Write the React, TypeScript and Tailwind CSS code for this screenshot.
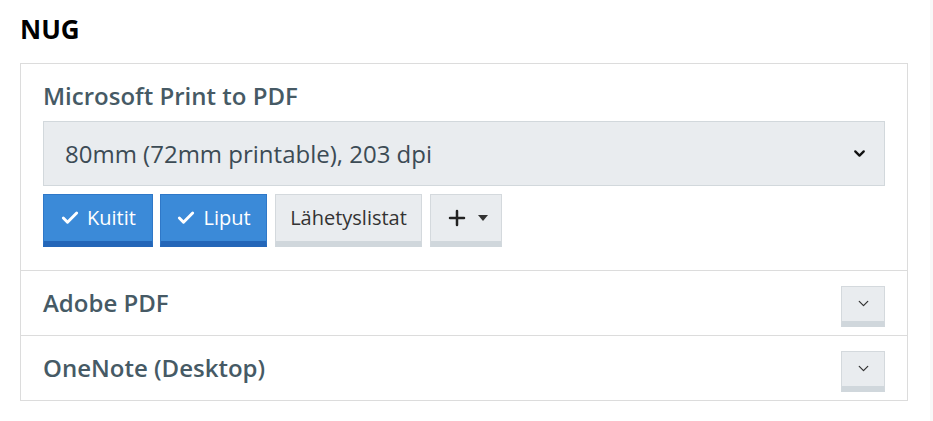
import { ChevronDown, Check, Plus } from "lucide-react";

function Caret() {
  return (
    <svg width="10" height="6" viewBox="0 0 10 6" className="ml-[9px]">
      <path d="M0 0 L10 0 L5 6 Z" fill="#333" />
    </svg>
  );
}

function Row({ name }: { name: string }) {
  return (
    <div className="flex items-center justify-between border-t border-[#dcdcdc] h-[65px] pl-[22px] pr-[22px]">
      <span className="text-[24px] font-semibold text-[#465a65]">{name}</span>
      <button className="mt-[6px] w-[44px] h-[41px] bg-[#e9ecef] border border-[#d4d9dd] border-b-[6px] border-b-[#d0d7dc] flex items-center justify-center">
        <ChevronDown size={17} strokeWidth={1.75} color="#333" />
      </button>
    </div>
  );
}

export default function App() {
  return (
    <div className="w-[933px] h-[421px] bg-white flex font-['Open_Sans',sans-serif]">
      <div className="flex-1 pl-[20px] pr-[22px]">
        <h1 className="text-[26px] font-bold text-black pt-[12px] leading-[34px]">NUG</h1>
        <div className="mt-[17px] border border-[#dcdcdc]">
          <div className="px-[22px] pt-[17px] pb-[23px]">
            <div className="text-[24px] font-semibold text-[#465a65] leading-[30px]">Microsoft Print to PDF</div>
            <div className="mt-[10px] h-[65px] bg-[#e9ecef] border border-[#d2d8dc] flex items-center justify-between pl-[21px] pr-[16px]">
              <span className="text-[24px] text-[#3c4b55]">80mm (72mm printable), 203 dpi</span>
              <ChevronDown size={17} strokeWidth={3.25} color="#111" />
            </div>
            <div className="mt-[8px] flex gap-[7px]">
              <button className="h-[53px] w-[110px] bg-[#3b8ad8] border border-[#2f78c8] border-b-[6px] border-b-[#2466b8] text-white text-[20px] flex items-center justify-center gap-[7px]">
                <Check size={20} strokeWidth={3.5} />
                Kuitit
              </button>
              <button className="h-[53px] w-[107px] bg-[#3b8ad8] border border-[#2f78c8] border-b-[6px] border-b-[#2466b8] text-white text-[20px] flex items-center justify-center gap-[7px]">
                <Check size={20} strokeWidth={3.5} />
                Liput
              </button>
              <button className="h-[53px] w-[147px] bg-[#e9ecef] border border-[#d4d9dd] border-b-[6px] border-b-[#d0d7dc] text-[#333] text-[20px] flex items-center justify-center ml-[1px]">
                Lähetyslistat
              </button>
              <button className="h-[53px] w-[72px] bg-[#e9ecef] border border-[#d4d9dd] border-b-[6px] border-b-[#d0d7dc] text-[#333] flex items-center justify-center ml-[1px]">
                <Plus size={24} strokeWidth={2.5} color="#222" />
                <Caret />
              </button>
            </div>
          </div>
          <Row name="Adobe PDF" />
          <Row name="OneNote (Desktop)" />
        </div>
      </div>
      <div className="w-[3px] bg-[#f8f8f8]" />
    </div>
  );
}
